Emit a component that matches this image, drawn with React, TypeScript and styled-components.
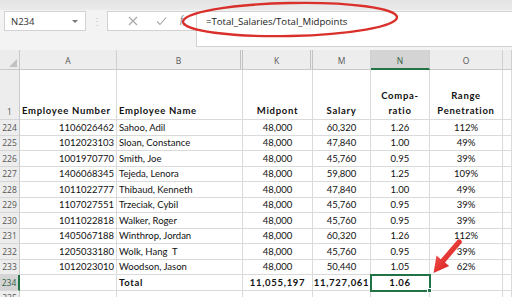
import styled, { createGlobalStyle } from "styled-components";

const GlobalStyle = createGlobalStyle`
  html, body {
    margin: 0;
    padding: 0;
    background: #ffffff;
  }
`;

const COLS = "20px 97px 126px 70px 58px 59px 73px 1fr";

type RowData = {
  num: string;
  id: string;
  name: string;
  mid: string;
  salary: string;
  compa: string;
  range: string;
};

const rows: RowData[] = [
  { num: "224", id: "1106026462", name: "Sahoo, Adil", mid: "48,000", salary: "60,320", compa: "1.26", range: "112%" },
  { num: "225", id: "1012023103", name: "Sloan, Constance", mid: "48,000", salary: "47,840", compa: "1.00", range: "49%" },
  { num: "226", id: "1001970770", name: "Smith, Joe", mid: "48,000", salary: "45,760", compa: "0.95", range: "39%" },
  { num: "227", id: "1406068345", name: "Tejeda, Lenora", mid: "48,000", salary: "59,800", compa: "1.25", range: "109%" },
  { num: "228", id: "1011022777", name: "Thibaud, Kenneth", mid: "48,000", salary: "47,840", compa: "1.00", range: "49%" },
  { num: "229", id: "1107027551", name: "Trzeciak, Cybil", mid: "48,000", salary: "45,760", compa: "0.95", range: "39%" },
  { num: "230", id: "1011022818", name: "Walker, Roger", mid: "48,000", salary: "45,760", compa: "0.95", range: "39%" },
  { num: "231", id: "1405067188", name: "Winthrop, Jordan", mid: "48,000", salary: "60,320", compa: "1.26", range: "112%" },
  { num: "232", id: "1205033180", name: "Wolk, Hang  T", mid: "48,000", salary: "45,760", compa: "0.95", range: "39%" },
  { num: "233", id: "1012023010", name: "Woodson, Jason", mid: "48,000", salary: "50,440", compa: "1.05", range: "62%" },
];

function App() {
  return (
    <Page>
      <GlobalStyle />
      <TopStrip />
      <FormulaBar>
        <NameBox>
          <span>N234</span>
          <DropArrow />
        </NameBox>
        <Grip>⋮</Grip>
        <FormulaBox>
          <IconArea>
            <IconButton>
              <svg width="10" height="10" viewBox="0 0 10 10">
                <path d="M1 1 L9 9 M9 1 L1 9" stroke="#a6a6a6" strokeWidth="1.1" fill="none" />
              </svg>
            </IconButton>
            <IconButton>
              <svg width="11" height="10" viewBox="0 0 11 10">
                <path d="M1 5.5 L4 8.5 L10 1.5" stroke="#a6a6a6" strokeWidth="1.1" fill="none" />
              </svg>
            </IconButton>
            <FxLabel>
              f<sub>x</sub>
            </FxLabel>
          </IconArea>
          <InputArea>=Total_Salaries/Total_Midpoints</InputArea>
        </FormulaBox>
      </FormulaBar>

      <Sheet>
        <Row $height={20}>
          <Corner>
            <CornerMark />
          </Corner>
          <ColHead>A</ColHead>
          <ColHead $hidden>B</ColHead>
          <ColHead $hidden>K</ColHead>
          <ColHead>M</ColHead>
          <ColHead $active>N</ColHead>
          <ColHead>O</ColHead>
          <ColHead />
        </Row>

        <Row $height={50}>
          <RowHead $tall>1</RowHead>
          <Cell $bold $tall>Employee Number</Cell>
          <Cell $bold $tall>Employee Name</Cell>
          <Cell $bold $tall $align="center">Midpont</Cell>
          <Cell $bold $tall $align="center">Salary</Cell>
          <Cell $bold $tall $align="center">
            Compa-
            <br />
            ratio
          </Cell>
          <Cell $bold $tall $align="center">
            Range
            <br />
            Penetration
          </Cell>
          <Cell />
        </Row>

        {rows.map((r) => (
          <Row key={r.num} $height={15.5}>
            <RowHead>{r.num}</RowHead>
            <Cell $align="right">{r.id}</Cell>
            <Cell>{r.name}</Cell>
            <Cell $align="center">{r.mid}</Cell>
            <Cell $align="center">{r.salary}</Cell>
            <Cell $align="center">{r.compa}</Cell>
            <Cell $align="center">{r.range}</Cell>
            <Cell />
          </Row>
        ))}

        <Row $height={15.5}>
          <RowHead $active>234</RowHead>
          <Cell />
          <Cell $bold>Total</Cell>
          <Cell $bold $align="center">11,055,197</Cell>
          <Cell $bold $align="center">11,727,061</Cell>
          <Cell $bold $align="center" $selected>
            1.06
            <FillHandle />
          </Cell>
          <Cell />
          <Cell />
        </Row>

        <Row $height={15.5}>
          <RowHead>235</RowHead>
          <Cell />
          <Cell />
          <Cell />
          <Cell />
          <Cell />
          <Cell />
          <Cell />
        </Row>
      </Sheet>

      <Annotation width="512" height="297" viewBox="0 0 512 297">
        <defs>
          <linearGradient id="arrowFill" x1="0" y1="0" x2="1" y2="1">
            <stop offset="0" stopColor="#f46a66" />
            <stop offset="0.55" stopColor="#e3322f" />
            <stop offset="1" stopColor="#c41d1d" />
          </linearGradient>
        </defs>
        <ellipse
          cx="290"
          cy="19.5"
          rx="107"
          ry="16.5"
          fill="none"
          stroke="#d9302c"
          strokeWidth="2.4"
          transform="rotate(-1.2 290 19.5)"
        />
        <path
          d="M433.5 273 L436.5 255.5 L440.8 259.2 L457.8 239.4 Q461.5 238.6 462 242.6 L445 262.4 L449.2 266 Z"
          fill="url(#arrowFill)"
        />
      </Annotation>
    </Page>
  );
}

export default App;

const Page = styled.div`
  position: relative;
  width: 512px;
  height: 297px;
  overflow: hidden;
  background: #f3f3f3;
  font-family: "Lato", "Liberation Sans", sans-serif;
`;

const TopStrip = styled.div`
  height: 10px;
  background: linear-gradient(#e3e3e3, #ebebeb);
`;

const FormulaBar = styled.div`
  display: flex;
  align-items: flex-start;
  height: 40px;
  padding: 1px 0 0 4px;
  box-sizing: border-box;
  background: #f3f3f3;
`;

const NameBox = styled.div`
  display: flex;
  align-items: center;
  justify-content: space-between;
  width: 82px;
  height: 20px;
  box-sizing: border-box;
  padding: 0 7px 0 6px;
  background: #fff;
  border: 1px solid #d2d2d2;
  font-family: "Open Sans", sans-serif;
  font-size: 9.5px;
  color: #333;
`;

const DropArrow = styled.span`
  width: 0;
  height: 0;
  border-left: 3px solid transparent;
  border-right: 3px solid transparent;
  border-top: 3px solid #777;
`;

const Grip = styled.div`
  width: 21px;
  height: 20px;
  line-height: 20px;
  text-align: center;
  color: #c4c4c4;
  font-size: 10px;
`;

const FormulaBox = styled.div`
  display: flex;
  align-items: flex-start;
  flex: 1;
`;

const IconArea = styled.div`
  display: flex;
  align-items: center;
  width: 89px;
  height: 20px;
  box-sizing: border-box;
  padding-left: 10px;
  background: #fff;
  border: 1px solid #d2d2d2;
  border-right: none;
`;

const IconButton = styled.div`
  display: flex;
  align-items: center;
  justify-content: center;
  width: 29px;
  height: 18px;
`;

const FxLabel = styled.div`
  margin-left: 4px;
  font-family: "Liberation Serif", serif;
  font-style: italic;
  font-size: 10px;
  color: #777;

  sub {
    font-size: 7px;
  }
`;

const InputArea = styled.div`
  flex: 1;
  height: 36px;
  box-sizing: border-box;
  padding: 3px 0 0 9px;
  background: #fff;
  border: 1px solid #d2d2d2;
  border-right: none;
  font-family: "Open Sans", sans-serif;
  font-size: 9.6px;
  color: #222;
`;

const Sheet = styled.div`
  display: flex;
  flex-direction: column;
  background: #fff;
`;

const Row = styled.div<{ $height: number }>`
  display: grid;
  grid-template-columns: ${COLS};
  height: ${({ $height }) => $height}px;
  flex-shrink: 0;
`;

const Corner = styled.div`
  position: relative;
  background: #ececec;
  border-right: 1px solid #c9c9c9;
  border-bottom: 1px solid #c9c9c9;
`;

const CornerMark = styled.div`
  position: absolute;
  right: 2px;
  bottom: 2px;
  width: 0;
  height: 0;
  border-left: 8px solid transparent;
  border-bottom: 8px solid #c2c2c2;
`;

const ColHead = styled.div<{ $active?: boolean; $hidden?: boolean }>`
  display: flex;
  align-items: center;
  justify-content: center;
  box-sizing: border-box;
  padding-top: 2px;
  background: ${({ $active }) => ($active ? "#d4d4d4" : "#ededed")};
  border-right: ${({ $hidden }) => ($hidden ? "3px double #c2c2c2" : "1px solid #d0d0d0")};
  border-bottom: ${({ $active }) => ($active ? "2px solid #217346" : "1px solid #c9c9c9")};
  font-family: "Open Sans", sans-serif;
  font-size: 8.5px;
  color: ${({ $active }) => ($active ? "#2e5e40" : "#555")};
`;

const RowHead = styled.div<{ $active?: boolean; $tall?: boolean }>`
  display: flex;
  align-items: ${({ $tall }) => ($tall ? "flex-end" : "center")};
  justify-content: center;
  box-sizing: border-box;
  padding-bottom: ${({ $tall }) => ($tall ? "2px" : "0")};
  background: ${({ $active }) => ($active ? "#d4d4d4" : "#ededed")};
  border-right: ${({ $active }) => ($active ? "2px solid #217346" : "1px solid #c9c9c9")};
  border-bottom: 1px solid #d6d6d6;
  font-family: "Open Sans", sans-serif;
  font-size: 8.5px;
  color: ${({ $active }) => ($active ? "#2e5e40" : "#555")};
`;

const Cell = styled.div<{
  $align?: "left" | "center" | "right";
  $bold?: boolean;
  $tall?: boolean;
  $selected?: boolean;
}>`
  position: relative;
  display: flex;
  flex-direction: column;
  justify-content: ${({ $tall }) => ($tall ? "flex-end" : "center")};
  align-items: ${({ $align }) =>
    $align === "center" ? "center" : $align === "right" ? "flex-end" : "flex-start"};
  box-sizing: border-box;
  padding: ${({ $tall }) => ($tall ? "0 2px 1px" : "0 2px")};
  border-right: 1px solid #dadada;
  border-bottom: 1px solid #dadada;
  font-size: 9.5px;
  line-height: ${({ $tall }) => ($tall ? "15px" : "1")};
  font-weight: ${({ $bold }) => ($bold ? 700 : 400)};
  letter-spacing: ${({ $bold }) => ($bold ? "0.7px" : "0")};
  color: #111;
  text-align: ${({ $align }) => $align ?? "left"};
  white-space: pre;
  outline: ${({ $selected }) => ($selected ? "2px solid #217346" : "none")};
  outline-offset: -1px;
  z-index: ${({ $selected }) => ($selected ? 1 : 0)};
`;

const FillHandle = styled.span`
  position: absolute;
  right: -3px;
  bottom: -3px;
  width: 5px;
  height: 5px;
  background: #217346;
  border: 1px solid #fff;
  box-sizing: border-box;
`;

const Annotation = styled.svg`
  position: absolute;
  left: 0;
  top: 0;
  pointer-events: none;
  z-index: 5;
`;
